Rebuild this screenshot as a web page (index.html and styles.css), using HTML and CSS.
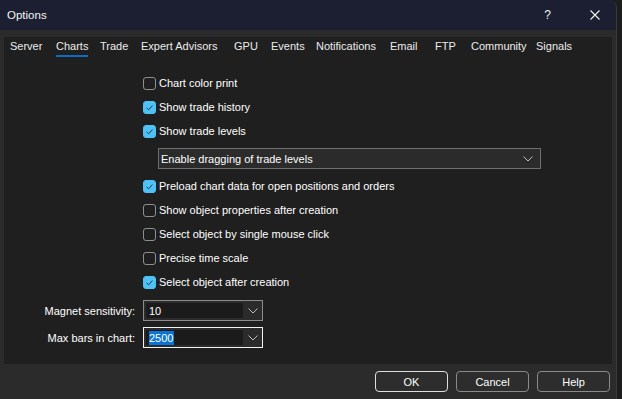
FILE: index.html
```html
<!DOCTYPE html>
<html>
<head>
<meta charset="utf-8">
<title>Options</title>
<link rel="stylesheet" href="styles.css">
</head>
<body>
<div class="window">
  <div class="titlebar">
    <span class="title">Options</span>
    <div class="controls">
      <span class="help-q">?</span>
      <svg class="close" width="10" height="10" viewBox="0 0 10 10"><path d="M0.5 0.5 L9.5 9.5 M9.5 0.5 L0.5 9.5" stroke="#f2f2f2" stroke-width="1.1" fill="none"/></svg>
    </div>
  </div>
  <div class="frame">
    <div class="panel">
      <div class="tabs">
        <span class="tab">Server</span>
        <span class="tab active"><span class="tab-label">Charts</span></span>
        <span class="tab">Trade</span>
        <span class="tab">Expert Advisors</span>
        <span class="tab">GPU</span>
        <span class="tab">Events</span>
        <span class="tab">Notifications</span>
        <span class="tab">Email</span>
        <span class="tab">FTP</span>
        <span class="tab">Community</span>
        <span class="tab">Signals</span>
      </div>
      <div class="content">
        <div class="checks">
          <div class="row"><span class="box"></span><span>Chart color print</span></div>
          <div class="row"><span class="box on"><svg width="13" height="13" viewBox="0 0 13 13"><path d="M3.6 6.9 L5.6 8.8 L9.4 4.6" stroke="#1d3b4d" stroke-width="1" fill="none"/></svg></span><span>Show trade history</span></div>
          <div class="row"><span class="box on"><svg width="13" height="13" viewBox="0 0 13 13"><path d="M3.6 6.9 L5.6 8.8 L9.4 4.6" stroke="#1d3b4d" stroke-width="1" fill="none"/></svg></span><span>Show trade levels</span></div>
          <div class="combo-row">
            <div class="combo wide">
              <span>Enable dragging of trade levels</span>
              <svg width="10" height="6" viewBox="0 0 10 6"><path d="M0.5 0.5 L5 5 L9.5 0.5" stroke="#bdbdbd" stroke-width="1" fill="none"/></svg>
            </div>
          </div>
          <div class="row"><span class="box on"><svg width="13" height="13" viewBox="0 0 13 13"><path d="M3.6 6.9 L5.6 8.8 L9.4 4.6" stroke="#1d3b4d" stroke-width="1" fill="none"/></svg></span><span>Preload chart data for open positions and orders</span></div>
          <div class="row"><span class="box"></span><span>Show object properties after creation</span></div>
          <div class="row"><span class="box"></span><span>Select object by single mouse click</span></div>
          <div class="row"><span class="box"></span><span>Precise time scale</span></div>
          <div class="row"><span class="box on"><svg width="13" height="13" viewBox="0 0 13 13"><path d="M3.6 6.9 L5.6 8.8 L9.4 4.6" stroke="#1d3b4d" stroke-width="1" fill="none"/></svg></span><span>Select object after creation</span></div>
        </div>
        <div class="form">
          <label class="flabel">Magnet sensitivity:</label>
          <div class="combo small">
            <span class="edit">10</span>
            <span class="drop"><svg width="10" height="6" viewBox="0 0 10 6"><path d="M0.5 0.5 L5 5 L9.5 0.5" stroke="#bdbdbd" stroke-width="1" fill="none"/></svg></span>
          </div>
          <label class="flabel">Max bars in chart:</label>
          <div class="combo small focus">
            <span class="edit"><span class="sel">2500</span></span>
            <span class="drop"><svg width="10" height="6" viewBox="0 0 10 6"><path d="M0.5 0.5 L5 5 L9.5 0.5" stroke="#bdbdbd" stroke-width="1" fill="none"/></svg></span>
          </div>
        </div>
      </div>
    </div>
    <div class="footer">
      <button class="btn default">OK</button>
      <button class="btn">Cancel</button>
      <button class="btn">Help</button>
    </div>
  </div>
</div>
</body>
</html>
```

FILE: styles.css
```css
* { box-sizing: border-box; }
html, body {
  margin: 0;
  padding: 0;
  background: #1d1d1d;
  width: 622px;
  height: 399px;
  overflow: hidden;
  font-family: "Liberation Sans", Arial, sans-serif;
  font-size: 11px;
  color: #ffffff;
}
.window {
  width: 617px;
  height: 399px;
  background: #2b2b2b;
  border-top-right-radius: 8px;
  border-right: 1px solid #3a3a3a;
  overflow: hidden;
  display: flex;
  flex-direction: column;
}
.titlebar {
  height: 30px;
  background: #1b1f31;
  display: flex;
  align-items: center;
  justify-content: space-between;
  padding-left: 7px;
  flex: none;
}
.title {
  font-size: 11.5px;
  color: #f4f4f4;
}
.controls {
  display: flex;
  align-items: center;
  height: 30px;
}
.help-q {
  font-size: 12px;
  color: #f0f0f0;
  margin-right: 39px;
}
.close {
  margin-right: 16px;
}
.frame {
  flex: 1;
  display: flex;
  flex-direction: column;
  padding: 7px 4px 0 4px;
}
.panel {
  height: 327px;
  background: #1f1f1f;
  display: flex;
  flex-direction: column;
}
.tabs {
  height: 20px;
  display: grid;
  grid-template-columns: 46px 44px 41px 93px 37px 45px 74px 45px 36px 65px auto;
  padding-left: 6px;
  align-items: start;
  color: #ececec;
}
.tab {
  height: 20px;
  line-height: 19px;
  white-space: nowrap;
}
.tab-label {
  display: inline-block;
  height: 20px;
  border-bottom: 2px solid #0f6cc4;
}
.content {
  display: flex;
  flex-direction: column;
  padding-top: 14px;
}
.checks {
  display: flex;
  flex-direction: column;
  padding-left: 139px;
}
.row {
  height: 24px;
  display: flex;
  align-items: center;
  gap: 3px;
  white-space: nowrap;
}
.box {
  width: 13px;
  height: 13px;
  border: 1px solid #8f8f8f;
  border-radius: 3px;
  display: flex;
  flex: none;
}
.box.on {
  background: #4fc1f5;
  border-color: #4fc1f5;
}
.box svg { margin: -1px; }
.combo-row {
  height: 31px;
  display: flex;
  align-items: center;
  padding-left: 15px;
}
.combo.wide {
  width: 383px;
  height: 21px;
  background: #2b2b2b;
  border: 1px solid #6e6e6e;
  display: flex;
  align-items: center;
  justify-content: space-between;
  padding: 0 7px 0 2px;
}
.form {
  margin-top: 6px;
  display: grid;
  grid-template-columns: 131px 120px;
  column-gap: 8px;
  row-gap: 6px;
  align-items: center;
}
.flabel {
  text-align: right;
  white-space: nowrap;
}
.combo.small {
  height: 21px;
  border: 1px solid #8c8c8c;
  background: #2b2b2b;
  display: flex;
  padding: 2px 0 2px 2px;
}
.combo.small.focus {
  border-color: #f2f2f2;
}
.edit {
  width: 97px;
  background: #1b1b1b;
  display: flex;
  align-items: center;
  padding-left: 3px;
}
.sel {
  background: #0a74d6;
  color: #ffffff;
  line-height: 14px;
  padding: 0 1px 0 0;
}
.drop {
  flex: 1;
  display: flex;
  align-items: center;
  justify-content: center;
}
.footer {
  flex: 1;
  display: flex;
  justify-content: flex-end;
  align-items: flex-start;
  padding-top: 7px;
  padding-right: 2px;
  gap: 8px;
}
.btn {
  width: 73px;
  height: 21px;
  background: #2d2d2d;
  border: 1px solid #8a8a8a;
  border-radius: 4px;
  color: #ffffff;
  font-family: "Liberation Sans", Arial, sans-serif;
  font-size: 11px;
  padding: 0;
}
.btn.default {
  border-color: #dedede;
}
```
